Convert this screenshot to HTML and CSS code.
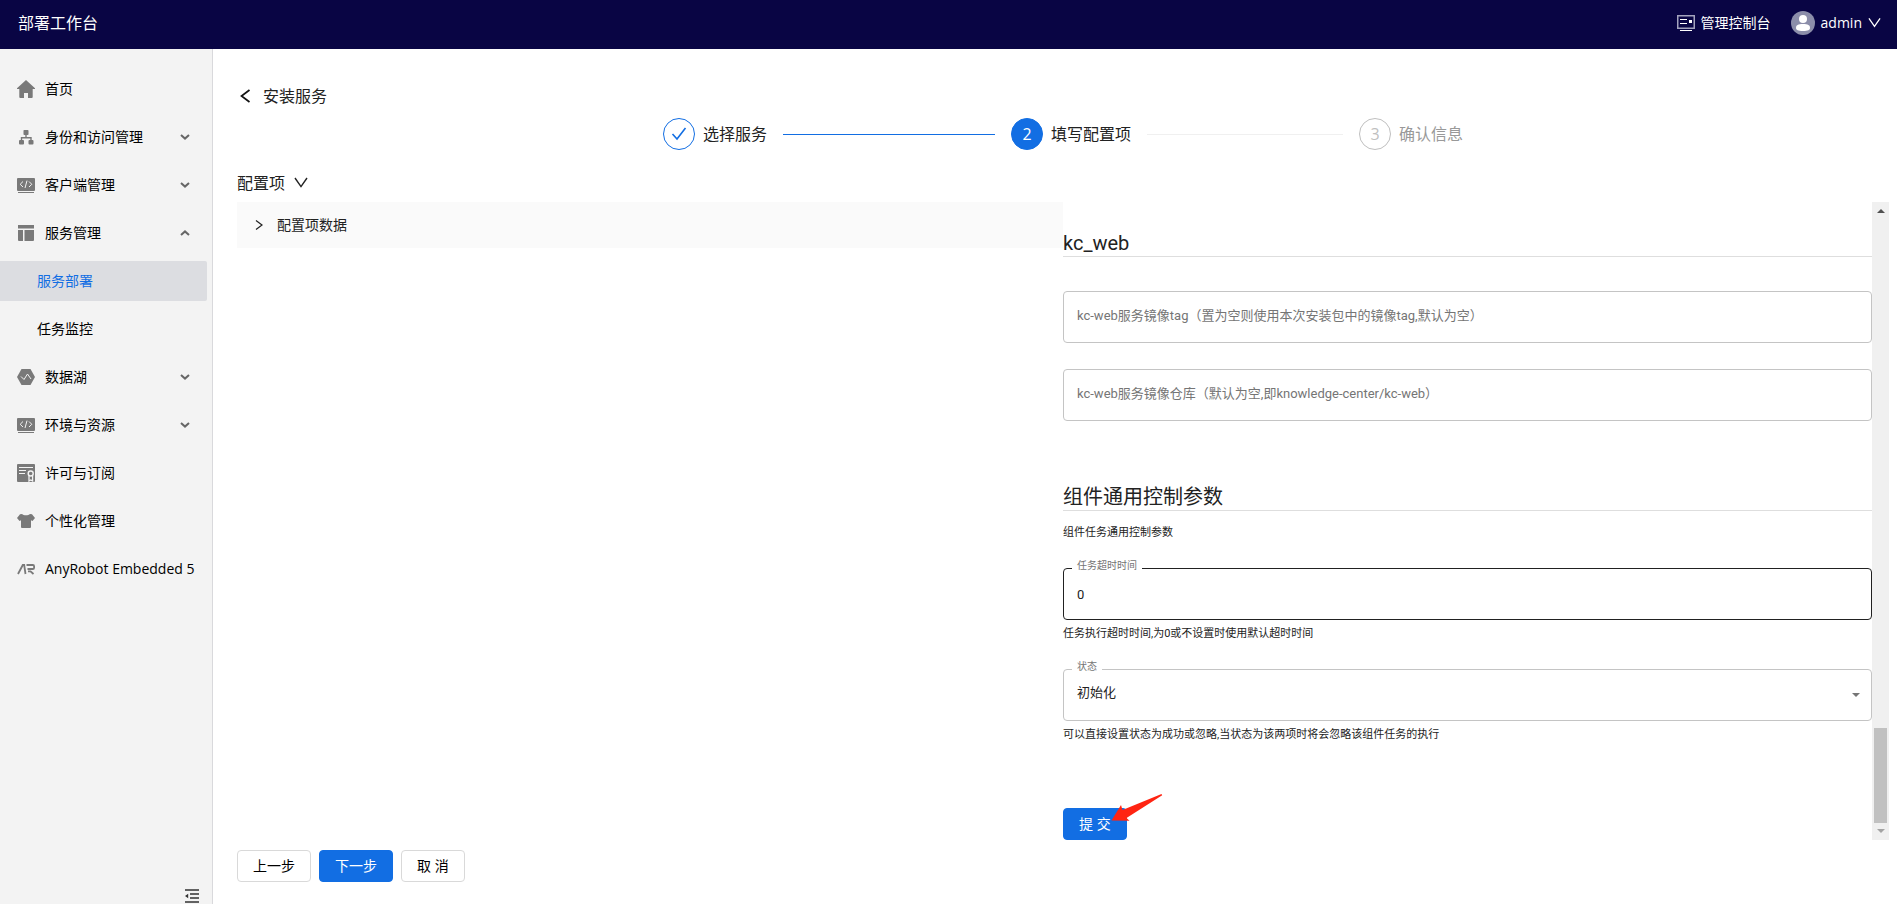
FILE: index.html
```
<!DOCTYPE html>
<html lang="zh-CN">
<head>
<meta charset="utf-8">
<title>部署工作台</title>
<link rel="stylesheet" href="styles.css">
</head>
<body>
<svg class="defs" aria-hidden="true">
  <symbol id="chevron" viewBox="0 0 10 6"><path d="M1 1l4 3.6L9 1" fill="none" stroke="currentColor" stroke-width="2"/></symbol>
  <symbol id="angle" viewBox="0 0 14 12"><path d="M1 1l6 8.6L13 1" fill="none" stroke="currentColor" stroke-width="1.4"/></symbol>
  <symbol id="code" viewBox="0 0 18 18"><rect y="2" width="18" height="13" rx="1" fill="currentColor"/><path d="M1 16.500h16" stroke="currentColor"/><path d="M6 5.500L3.200 8.300 6 11M12 5.500l2.800 2.800L12 11M10 4.600L8 12" fill="none" stroke="#f3f3f3"/></symbol>
</svg>
<div class="app">
  <header class="topbar">
    <h1 class="brand">部署工作台</h1>
    <div class="topbar-actions">
      <a class="console" href="#">
        <svg width="18" height="17" viewBox="0 0 18 17"><rect x=".75" y=".75" width="16.5" height="12.5" fill="none" stroke="#a3a3bd" stroke-width="1.5"/><path d="M3 4.5h7M3 8.5h7M3 15.5h12" stroke="#fff"/><path d="M12 5h3v3h-3z" fill="#fff"/></svg>
        管理控制台
      </a>
      <button class="user" type="button">
        <svg width="24" height="24" viewBox="0 0 24 24"><circle cx="12" cy="12" r="12" fill="#8c8eaa"/><circle cx="12" cy="8" r="4" fill="#fff"/><path d="M5 17c0-3 2-4 7-4s7 1 7 4c0 2-2 3-7 3s-7-1-7-3z" fill="#fff"/></svg>
        <span>admin</span>
        <svg class="user-caret" width="14" height="12"><use href="#angle"/></svg>
      </button>
    </div>
  </header>
  <div class="body">
    <aside class="sidebar">
      <nav class="menu">
        <a class="item" href="#"><svg class="icon" viewBox="0 0 18 18"><path d="M9 0l9 8.3V9h-2.300v8a1 1 0 0 1-1 1H11v-5H7v5H3.300a1 1 0 0 1-1-1V9H0v-.7z"/></svg><span>首页</span></a>
        <a class="item" href="#"><svg class="icon" viewBox="0 0 18 18"><rect x="6.500" y="2" width="5" height="5" rx=".8"/><rect x="2" y="12" width="5" height="4.500" rx="1"/><rect x="11.500" y="12" width="5" height="4.500" rx="1"/><path d="M9 7v3M4.500 12v-2.200h9.500V12" fill="none" stroke="currentColor" stroke-width="1.400"/></svg><span>身份和访问管理</span><svg class="caret"><use href="#chevron"/></svg></a>
        <a class="item" href="#"><svg class="icon"><use href="#code"/></svg><span>客户端管理</span><svg class="caret"><use href="#chevron"/></svg></a>
        <a class="item" href="#"><svg class="icon" viewBox="0 0 18 18"><path d="M1 1h16v3.500H1zM1 6h5v11H2a1 1 0 0 1-1-1zM7.500 6H17v10a1 1 0 0 1-1 1H7.500z"/></svg><span>服务管理</span><svg class="caret caret-up"><use href="#chevron"/></svg></a>
        <a class="item sub active" href="#"><span>服务部署</span></a>
        <a class="item sub" href="#"><span>任务监控</span></a>
        <a class="item" href="#"><svg class="icon" viewBox="0 0 18 18"><path d="M4.500 1h9L18 9l-4.500 8h-9L0 9z"/><path d="M4 8.500l3 3 3.500-5.500L14 11" fill="none" stroke="#f3f3f3"/></svg><span>数据湖</span><svg class="caret"><use href="#chevron"/></svg></a>
        <a class="item" href="#"><svg class="icon"><use href="#code"/></svg><span>环境与资源</span><svg class="caret"><use href="#chevron"/></svg></a>
        <a class="item" href="#"><svg class="icon" viewBox="0 0 18 18"><rect width="18" height="18" rx="1"/><path d="M2 3.500h14M2 6.500h7M2 9.500h6" stroke="#f3f3f3"/><path d="M12 11.500V17l1.800-1 1.800 1v-5.500" fill="none" stroke="#f3f3f3" stroke-width="1.300"/><circle cx="13.700" cy="9.500" r="2.500" fill="#797979" stroke="#f3f3f3" stroke-width="1.400"/></svg><span>许可与订阅</span></a>
        <a class="item" href="#"><svg class="icon" viewBox="0 0 18 18"><path d="M5 2c1.500 1.800 6.500 1.800 8 0l2 .3L18 6l-2.500 3-1.500-.8V15a1 1 0 0 1-1 1H5a1 1 0 0 1-1-1V8.200L2.500 9 0 6l3-3.700z"/></svg><span>个性化管理</span></a>
        <a class="item" href="#"><svg class="icon" viewBox="0 0 18 18"><path d="M1 14L5.800 5h1.400l1.300 9M9.500 5h6.300a1.300 1.300 0 0 1 1.300 1.300v1.400A1.300 1.300 0 0 1 15.800 9H10.500M11 11.300h2.500l3 2.700" fill="none" stroke="currentColor" stroke-width="1.800"/></svg><span>AnyRobot Embedded 5</span></a>
      </nav>
      <button class="collapse" type="button" aria-label="收起菜单"><svg width="14" height="14" viewBox="0 0 14 14"><path d="M0 1h14M5 5h9M5 9h9M0 13h14" stroke="#333" stroke-width="1.300"/><path d="M0 7l3.200-2.300v4.600z" fill="#333"/></svg></button>
    </aside>
    <main class="main">
      <div class="page-head">
        <button class="back" type="button" aria-label="返回"><svg width="11" height="14" viewBox="0 0 11 14"><path d="M9.500 1L1.500 7l8 6" fill="none" stroke="#111" stroke-width="1.700"/></svg></button>
        <h2 class="page-title">安装服务</h2>
      </div>
      <ol class="steps">
        <li class="step done"><span class="dot"><svg width="16" height="14" viewBox="0 0 16 14"><path d="M1.500 7l4.500 5L14.500 1" fill="none" stroke="currentColor" stroke-width="1.600"/></svg></span><span class="step-name">选择服务</span></li>
        <li class="step current"><span class="dot">2</span><span class="step-name">填写配置项</span></li>
        <li class="step wait"><span class="dot">3</span><span class="step-name">确认信息</span></li>
      </ol>
      <button class="section-toggle" type="button">配置项<svg width="14" height="12"><use href="#angle"/></svg></button>
      <div class="split">
        <section class="tree">
          <button class="tree-row" type="button"><svg width="8" height="12" viewBox="0 0 8 12"><path d="M1 1.500L7 6l-6 4.500" fill="none" stroke="currentColor" stroke-width="1.200"/></svg>配置项数据</button>
        </section>
        <form class="form">
          <h3 class="group-title">kc_web</h3>
          <div class="field first"><input class="control" type="text" aria-label="kc-web服务镜像tag" placeholder="kc-web服务镜像tag（置为空则使用本次安装包中的镜像tag,默认为空）"></div>
          <div class="field"><input class="control" type="text" aria-label="kc-web服务镜像仓库" placeholder="kc-web服务镜像仓库（默认为空,即knowledge-center/kc-web）"></div>
          <h3 class="group-title next">组件通用控制参数</h3>
          <p class="group-note">组件任务通用控制参数</p>
          <div class="field">
            <label class="tag" for="timeout">任务超时时间</label>
            <input class="control hovered" id="timeout" type="text" value="0">
          </div>
          <p class="hint">任务执行超时时间,为0或不设置时使用默认超时时间</p>
          <div class="field">
            <label class="tag" for="state">状态</label>
            <select class="control" id="state"><option>初始化</option></select>
            <span class="select-arrow"></span>
          </div>
          <p class="hint">可以直接设置状态为成功或忽略,当状态为该两项时将会忽略该组件任务的执行</p>
          <div class="submit">
            <button class="btn primary" type="button">提 交</button>
            <svg class="pointer" width="52" height="28" viewBox="0 0 52 28" aria-hidden="true"><path d="M.5 26.500L10 11l1.500 5L50.500 0l.7 1.200L15.500 24l3 2.700z" fill="#ff2412"/></svg>
          </div>
        </form>
        <div class="scrollbar" aria-hidden="true"><span class="arrow up"></span><span class="thumb"></span><span class="arrow down"></span></div>
      </div>
      <footer class="actions">
        <button class="btn" type="button">上一步</button>
        <button class="btn primary" type="button">下一步</button>
        <button class="btn" type="button">取 消</button>
      </footer>
    </main>
  </div>
</div>
</body>
</html>
```
FILE: styles.css
```
* { box-sizing: border-box; }
body {
  margin: 0;
  background: #fff;
  color: #222;
  font: 14px/20px "Open Sans", "Noto Sans CJK SC", sans-serif;
}
h1, h2, h3, p, ol { margin: 0; padding: 0; font-weight: 400; }
ol { list-style: none; }
a { color: inherit; text-decoration: none; }
button { margin: 0; padding: 0; border: 0; background: none; color: inherit; font: inherit; cursor: pointer; }
svg { display: block; flex: none; }
.defs { position: absolute; width: 0; height: 0; }

.app { display: flex; flex-direction: column; height: 100vh; }
.topbar {
  display: flex;
  align-items: center;
  justify-content: space-between;
  flex: none;
  height: 49px;
  padding: 0 16px 3px 18px;
  background: #090544;
  color: #fff;
}
.brand { font-size: 16px; line-height: 24px; }
.topbar-actions { display: flex; align-items: center; gap: 20px; }
.console, .user { display: flex; align-items: center; gap: 6px; }
.user-caret { width: 13px; }

.body { display: flex; flex: 1; min-height: 0; }
.sidebar {
  display: flex;
  flex-direction: column;
  justify-content: space-between;
  flex: none;
  width: 213px;
  padding-top: 20px;
  background: #f3f3f3;
  border-right: 1px solid #d9d9dc;
  color: #000;
}
.menu { display: flex; flex-direction: column; gap: 8px; padding-right: 5px; }
.item {
  display: flex;
  align-items: center;
  gap: 10px;
  height: 40px;
  padding: 0 17px;
  border-radius: 0 2px 2px 0;
  white-space: nowrap;
}
.sub { padding-left: 37px; }
.active { background: #dcdde1; color: #126ee3; }
.icon { width: 18px; height: 18px; color: #797979; fill: currentColor; }
.caret { width: 10px; height: 6px; margin-left: auto; color: #666; }
.caret-up { transform: rotate(180deg); }
.collapse { align-self: flex-end; padding: 0 13px 1px 0; }

.main { display: flex; flex-direction: column; flex: 1; min-width: 0; padding: 35px 8px 22px 24px; }
.page-head { display: flex; align-items: center; gap: 12px; height: 24px; padding-left: 3px; }
.page-title { font-size: 16px; line-height: 24px; }

.steps { display: flex; width: 800px; max-width: 100%; margin: 10px auto 0; font-size: 16px; line-height: 32px; }
.step { display: flex; align-items: center; gap: 8px; flex: 1; white-space: nowrap; }
.step:last-child { flex: none; }
.step:not(:last-child)::after { content: ""; flex: 1; height: 1px; margin: 0 16px 0 8px; background: #f0f0f0; }
.step.done:not(:last-child)::after { background: #126ee3; }
.dot {
  display: flex;
  align-items: center;
  justify-content: center;
  width: 32px;
  height: 32px;
  border: 1px solid #126ee3;
  border-radius: 50%;
  color: #126ee3;
}
.current .dot { background: #126ee3; color: #fff; }
.wait { color: #999; }
.wait .dot { border-color: #bfbfbf; color: #bfbfbf; }

.section-toggle { display: flex; align-items: center; gap: 9px; margin: 21px 0 7px; font-size: 16px; line-height: 24px; }

.split { display: flex; flex: 1; min-height: 0; }
.tree { flex: 0 0 50%; }
.tree-row { display: flex; align-items: center; gap: 14px; width: 100%; height: 46px; padding-left: 18px; background: #fafafa; }
.form { flex: 1; min-width: 0; padding-top: 28px; font-family: Roboto, "Noto Sans CJK SC", sans-serif; }
.group-title { border-bottom: 1px solid #dedede; font-size: 20px; line-height: 26px; }
.next { margin-top: 63px; }
.group-note { margin-top: 13px; font-size: 11px; line-height: 18px; }
.field { position: relative; margin-top: 26px; }
.first { margin-top: 34px; }
.control {
  display: block;
  width: 100%;
  height: 52px;
  padding: 0 13px 4px;
  border: 1px solid #c4c4c4;
  border-radius: 4px;
  outline: 0;
  appearance: none;
  background: #fff;
  color: #222;
  font: 13px/20px Roboto, "Noto Sans CJK SC", sans-serif;
}
.control::placeholder { color: #757575; opacity: 1; }
.hovered { border-color: #212121; padding-bottom: 0; }
.tag { position: absolute; top: -8px; left: 9px; padding: 0 5px; background: #fff; color: #757575; font-size: 10px; line-height: 12px; }
.select-arrow {
  position: absolute;
  top: 24px;
  right: 12px;
  border: 4px solid transparent;
  border-top-color: #757575;
  border-bottom: 0;
  pointer-events: none;
}
.hint { margin-top: 5px; font-size: 11px; line-height: 18px; }
.submit { position: relative; display: inline-block; margin-top: 64px; }
.pointer { position: absolute; top: -14px; left: 48px; }

.scrollbar { display: flex; flex-direction: column; align-items: center; flex: none; width: 17px; padding: 7px 0; background: #f0f0f0; }
.thumb { flex: 0 0 95px; width: 13px; margin: auto 0 6px; background: #c1c1c1; }
.arrow { border: 4px solid transparent; }
.up { border-top: 0; border-bottom-color: #505050; }
.down { border-bottom: 0; border-top-color: #a3a3a3; }

.actions { display: flex; gap: 8px; margin-top: 10px; }
.btn { height: 32px; padding: 0 15px; border: 1px solid #d9d9d9; border-radius: 4px; background: #fff; color: #000; font: 14px/20px "Open Sans", "Noto Sans CJK SC", sans-serif; }
.primary { border-color: #126ee3; background: #126ee3; color: #fff; }
```
